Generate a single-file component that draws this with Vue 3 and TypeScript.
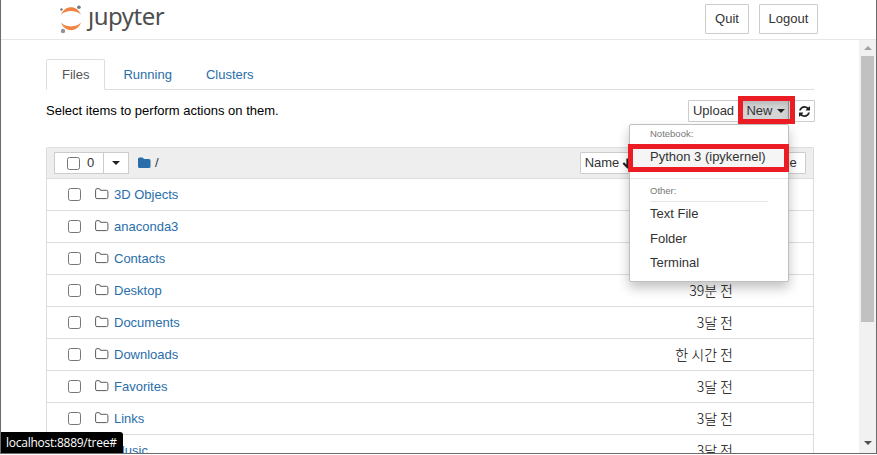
<script setup lang="ts">
interface Entry {
  name: string
  modified: string
}

const tabs: string[] = ['Files', 'Running', 'Clusters']
const entries: Entry[] = [
  { name: '3D Objects', modified: '3달 전' },
  { name: 'anaconda3', modified: '3달 전' },
  { name: 'Contacts', modified: '3달 전' },
  { name: 'Desktop', modified: '39분 전' },
  { name: 'Documents', modified: '3달 전' },
  { name: 'Downloads', modified: '한 시간 전' },
  { name: 'Favorites', modified: '3달 전' },
  { name: 'Links', modified: '3달 전' },
  { name: 'Music', modified: '3달 전' },
]
const otherItems: string[] = ['Text File', 'Folder', 'Terminal']
</script>

<template>
  <div class="window">
    <header class="header">
      <div class="logo">
        <svg class="logo-mark" width="22" height="29" viewBox="0 0 22 29">
          <path d="M1 9.8C3 4.6 7 2.2 11 2.2S19 4.6 21 9.8C18.5 7.2 15 6 11 6S3.500 7.200 1 9.800Z" fill="#f08442" />
          <path d="M1 17.600C3 22.800 7 25.200 11 25.200S19 22.800 21 17.600C18.500 20.200 15 21.400 11 21.400S3.500 20.200 1 17.600Z" fill="#f08442" />
          <circle cx="18.900" cy="2.200" r="1.800" fill="#77787b" />
          <circle cx="1.500" cy="4.500" r="1.200" fill="#77787b" />
          <circle cx="3" cy="26" r="2.200" fill="#929396" />
        </svg>
        <span class="logo-text">jupyter</span>
      </div>
      <div class="session">
        <button class="btn large quit">Quit</button>
        <button class="btn large logout">Logout</button>
      </div>
    </header>

    <div class="body">
      <main class="site">
        <nav class="tabs">
          <a v-for="(tab, i) in tabs" :key="tab" class="tab" :class="{ active: i === 0 }">{{ tab }}</a>
        </nav>

        <div class="toolbar">
          <span class="hint">Select items to perform actions on them.</span>
          <div class="actions">
            <button class="btn upload">Upload</button>
            <div class="new-wrap">
              <button class="btn new">New<i class="caret"></i></button>
              <div class="mark mark-new"></div>
              <div class="menu">
                <div class="menu-title">Notebook:</div>
                <div class="menu-item kernel">Python 3 (ipykernel)<div class="mark mark-kernel"></div></div>
                <div class="separator"></div>
                <div class="menu-title other">Other:</div>
                <div class="divider"></div>
                <div v-for="item in otherItems" :key="item" class="menu-item">{{ item }}</div>
              </div>
            </div>
            <button class="btn refresh">
              <svg width="11" height="11" viewBox="0 0 1536 1536">
                <path fill="#222" d="M1511 928q0 5-1 7-64 268-268 434.500T764 1536q-146 0-282.500-55T238 1324l-129 129q-19 19-45 19t-45-19-19-45V960q0-26 19-45t45-19h448q26 0 45 19t19 45-19 45l-137 137q71 66 161 102t187 36q134 0 250-65t186-179q11-17 53-117 8-23 30-23h192q13 0 22.500 9.500t9.500 22.500zm25-800v448q0 26-19 45t-45 19h-448q-26 0-45-19t-19-45 19-45l138-138Q969 256 768 256q-134 0-250 65T332 500q-11 17-53 117-8 23-30 23H50q-13 0-22.500-9.500T18 608v-7q65-268 270-434.500T768 0q146 0 284 55.500T1297 212l130-129q19-19 45-19t45 19 19 45z" />
              </svg>
            </button>
          </div>
        </div>

        <section class="list">
          <div class="list-head">
            <div class="selector">
              <span class="select-all"><i class="check"></i><span>0</span></span>
              <span class="select-more"><i class="caret"></i></span>
            </div>
            <svg class="crumb-icon" width="13" height="12" viewBox="0 0 13 12">
              <path fill="#296eaa" d="M0 2Q0 .5 1.500.500H4.300Q5.700.500 5.700 2H11Q12.500 2 12.500 3.500V9.500Q12.500 11 11 11H1.500Q0 11 0 9.500Z" />
            </svg>
            <span class="crumb">/</span>
            <div class="sorts">
              <button class="btn sort name">Name
                <svg width="11" height="11" viewBox="0 0 11 11"><path d="M5.500.500V9M1.300 5 5.500 9.200 9.700 5" fill="none" stroke="#222" stroke-width="2.200" /></svg>
              </button>
              <button class="btn sort modified">Last Modified</button>
              <button class="btn sort size">File size</button>
            </div>
          </div>
          <div v-for="entry in entries" :key="entry.name" class="row">
            <i class="check"></i>
            <svg class="folder" width="14" height="12" viewBox="0 0 14 12">
              <path d="M.600 2.200Q.600.700 2 .700H4.100Q5.400.700 5.400 2.300H11.500Q12.900 2.300 12.900 3.700V9.200Q12.900 10.600 11.500 10.600H2Q.600 10.600.600 9.200Z" fill="none" stroke="#5c5c5c" stroke-width="1" />
            </svg>
            <a class="entry-name">{{ entry.name }}</a>
            <span class="when">{{ entry.modified }}</span>
          </div>
        </section>
      </main>

      <aside class="scrollbar">
        <i class="arrow up"></i>
        <div class="thumb"></div>
        <i class="arrow down"></i>
      </aside>
    </div>
    <div class="status">localhost:8889/tree#</div>
  </div>
</template>

<style>
body {
  margin: 0;
  background: #fff;
}
</style>

<style scoped>
* {
  box-sizing: border-box;
}
.window {
  position: relative;
  width: 877px;
  height: 454px;
  border: solid #6b6b6b;
  border-width: 0 1px 1px;
  overflow: hidden;
  display: flex;
  flex-direction: column;
  font: 13px/18px "Liberation Sans", Arial, sans-serif;
  color: #000;
  background: #fff;
}
.header {
  flex: none;
  height: 40px;
  border-bottom: 1px solid #e7e7e7;
  display: flex;
  justify-content: space-between;
  padding: 4px 58px 0 59px;
}
.logo {
  display: flex;
}
.logo-mark {
  flex: none;
  margin-top: 1px;
}
.logo-text {
  position: relative;
  margin: -4px 0 0 6px;
  font: 24px/32px "Noto Sans", sans-serif;
  letter-spacing: -0.500px;
  color: #4e4e4e;
}
/* The wordmark uses a j without its dot. */
.logo-text::before {
  content: "";
  position: absolute;
  left: -2px;
  top: 4px;
  width: 10px;
  height: 8px;
  background: #fff;
}
.session {
  display: flex;
  gap: 10px;
}
.btn {
  margin: 0;
  padding: 0;
  border: 1px solid #ccc;
  border-radius: 1px;
  background: #fff;
  color: #333;
  font: inherit;
  white-space: nowrap;
  display: flex;
  align-items: center;
  justify-content: center;
}
.large {
  height: 30px;
}
.quit {
  width: 44px;
}
.logout {
  width: 59px;
}
.body {
  flex: 1;
  min-height: 0;
  display: flex;
  justify-content: space-between;
}
.site {
  width: 768px;
  margin-left: 45px;
  padding-top: 19px;
}
.tabs {
  display: flex;
  height: 31px;
  border-bottom: 1px solid #ddd;
}
.tab {
  height: 31px;
  padding: 6px 15px 0;
  border: 1px solid transparent;
  margin-right: 2px;
  color: #296eaa;
}
.tab.active {
  color: #555;
  background: #fff;
  border-color: #ddd;
  border-bottom-color: #fff;
  border-radius: 2px 2px 0 0;
}
.toolbar {
  display: flex;
  justify-content: space-between;
  margin-top: 10px;
  height: 22px;
}
.hint {
  padding-top: 2px;
}
.actions {
  display: flex;
  margin-right: -1px;
}
.actions .btn {
  height: 22px;
}
.upload {
  width: 51px;
}
.new-wrap {
  position: relative;
}
.new {
  width: 50px;
  gap: 4px;
}
.actions .new {
  padding-left: 3px;
  background: #d4d4d4;
  border-color: #8c8c8c;
  box-shadow: inset 0 3px 5px rgba(0, 0, 0, 0.125);
}
.refresh {
  width: 26px;
  padding-left: 4px;
}
.caret {
  display: inline-block;
  border: 4px solid transparent;
  border-top-color: #222;
  border-bottom: 0;
}
.mark {
  position: absolute;
  border: 5px solid #ec1c24;
}
.mark-new {
  left: -1px;
  top: -4px;
  width: 57px;
  height: 28px;
  z-index: 3;
}
.menu {
  position: absolute;
  z-index: 2;
  right: 0;
  top: 24px;
  width: 160px;
  height: 158px;
  padding-top: 1px;
  background: #fff;
  border: 1px solid #bfbfbf;
  border-radius: 2px;
  box-shadow: 0 6px 12px rgba(0, 0, 0, 0.24);
}
.menu-title {
  height: 18px;
  padding-left: 20px;
  font-size: 9.5px;
  line-height: 16px;
  color: #777;
}
.menu-item {
  height: 24.5px;
  padding: 3px 0 0 20px;
  color: #333;
  white-space: nowrap;
}
.kernel {
  position: relative;
  padding-top: 4px;
  background: #f5f5f5;
}
.mark-kernel {
  left: -2px;
  top: 0;
  width: 161px;
  height: 28px;
}
.separator {
  height: 1px;
  margin-top: 9.5px;
  background: #e5e5e5;
}
.other {
  margin-top: 4px;
}
.divider {
  height: 1px;
  margin: 0 20px;
  background: #e5e5e5;
}
.list {
  margin-top: 25px;
  border: solid #ddd;
  border-width: 1px 1px 0;
  border-radius: 2px 2px 0 0;
}
.list-head {
  height: 30px;
  display: flex;
  align-items: center;
  padding: 0 7px 0 7px;
  background: #eee;
}
.selector {
  display: flex;
  width: 75px;
  height: 22px;
  border: 1px solid #ccc;
  background: #fff;
}
.select-all {
  display: flex;
  align-items: center;
  gap: 7px;
  width: 48px;
  padding-left: 12px;
  color: #333;
}
.select-more {
  flex: 1;
  display: flex;
  align-items: center;
  justify-content: center;
  padding-right: 1px;
  border-left: 1px solid #ccc;
}
.check {
  flex: none;
  width: 13px;
  height: 13px;
  border: 1px solid #767676;
  border-radius: 2.5px;
  background: #fff;
}
.crumb-icon {
  margin: 0 0 1px 9px;
}
.crumb {
  margin: 0 0 1px 4px;
  color: #333;
}
.sorts {
  display: flex;
  margin-left: auto;
}
.sort {
  height: 22px;
}
.name {
  width: 55px;
  gap: 3px;
  padding-left: 3px;
}
.modified {
  width: 104px;
}
.size {
  width: 67px;
  padding-left: 1px;
}
.row {
  display: flex;
  align-items: center;
  height: 32px;
  padding-left: 21px;
  border-top: 1px solid #ddd;
}
.folder {
  margin: 0 0 2px 14px;
}
.entry-name {
  margin-left: 5px;
  color: #296eaa;
}
.when {
  margin: 0 80px 2px auto;
  font-family: "Noto Sans CJK KR", sans-serif;
  font-size: 14px;
  font-weight: 300;
}
.scrollbar {
  width: 17px;
  background: #f1f1f1;
  display: flex;
  flex-direction: column;
  align-items: center;
}
.arrow {
  flex: none;
  border: 4px solid transparent;
}
.up {
  border-top: 0;
  border-bottom-color: #a3a3a3;
  margin: 6px 0;
}
.thumb {
  flex: none;
  width: 13px;
  height: 266px;
  background: #c1c1c1;
}
.down {
  border-bottom: 0;
  border-top-color: #505050;
  margin: auto 0 8px;
}
.status {
  position: absolute;
  left: 0;
  bottom: 0;
  width: 122px;
  height: 21px;
  padding-left: 5px;
  border-radius: 0 3px 0 0;
  background: #000;
  color: #fff;
  font: 12px/21px "Open Sans", "Noto Sans", sans-serif;
  letter-spacing: -0.250px;
  white-space: nowrap;
}
</style>
